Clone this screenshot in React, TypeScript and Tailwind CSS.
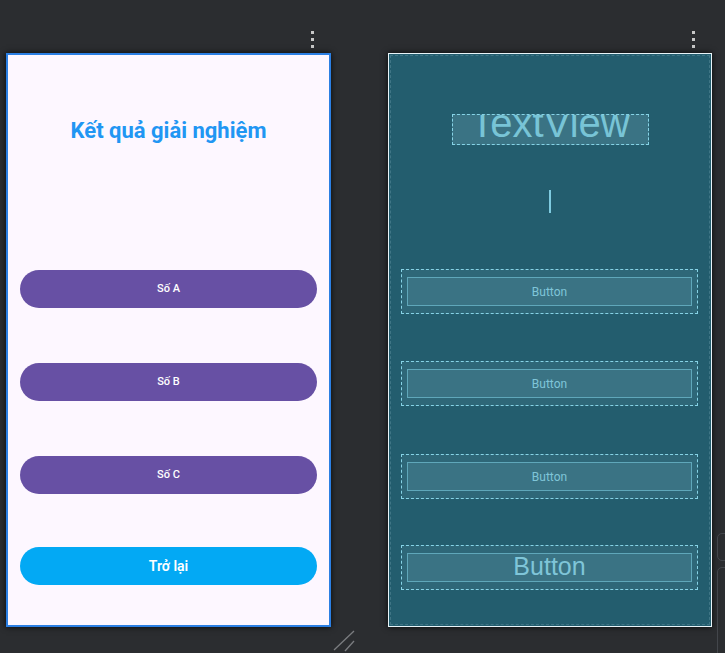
const Dots = () => (
    <div className="flex flex-col gap-[4px] pt-[31px]">
        <span className="w-[3px] h-[3px] bg-[#c8c8c8]" />
        <span className="w-[3px] h-[3px] bg-[#c8c8c8]" />
        <span className="w-[3px] h-[3px] bg-[#c8c8c8]" />
    </div>
);

const DesignButton = ({ label, className }: { label: string; className: string }) => (
    <div
        className={`mx-[12px] h-[38px] rounded-full flex items-center justify-center text-white ${className}`}
    >
        {label}
    </div>
);

const BlueprintButton = ({ big, className }: { big?: boolean; className: string }) => (
    <div
        className={`ml-[10px] mr-[11px] h-[45px] border border-dashed border-[#86d3e6] bg-[#2e6778] px-[5px] py-[7px] ${className}`}
    >
        <div className="h-full border border-[#5fa7ba] bg-[#3a7384] flex items-center justify-center text-[#7fc5d8]">
            {big ? (
                <span className="text-[25px] leading-none font-['Liberation_Sans',sans-serif] -mt-[3px]">Button</span>
            ) : (
                <span className="text-[12px] leading-none font-['Roboto',sans-serif]">Button</span>
            )}
        </div>
    </div>
);

export default function App() {
    return (
        <div className="relative w-[725px] h-[653px] overflow-hidden bg-[#2b2d30] flex pl-[6px]">
            {/* Design view */}
            <div className="w-[325px] flex flex-col">
                <div className="h-[53px] flex justify-end pr-[17px]">
                    <Dots />
                </div>
                <div className="h-[574px] border-2 border-[#2b7fe3] bg-[#fdf7ff] flex flex-col shadow-[0_0_6px_rgba(0,0,0,0.8)] font-['Roboto',sans-serif]">
                    <h1 className="mt-[61px] h-[30px] text-center text-[22px] leading-[30px] font-bold text-[#2196f3]">
                        Kết quả giải nghiệm
                    </h1>
                    <DesignButton label="Số A" className="mt-[124px] bg-[#6750a4] text-[11px] font-medium" />
                    <DesignButton label="Số B" className="mt-[55px] bg-[#6750a4] text-[11px] font-medium" />
                    <DesignButton label="Số C" className="mt-[55px] bg-[#6750a4] text-[11px] font-medium" />
                    <DesignButton label="Trở lại" className="mt-[53px] bg-[#03a9f4] text-[14px] font-semibold" />
                </div>
            </div>

            {/* Blueprint view */}
            <div className="ml-[57px] w-[324px] flex flex-col">
                <div className="h-[53px] flex justify-end pr-[17px]">
                    <Dots />
                </div>
                <div className="h-[574px] border border-[#e8f4f8] bg-[#235d6e] p-[1px] shadow-[0_0_6px_rgba(0,0,0,0.8)]">
                    <div className="h-full border border-dashed border-[#3f7585] flex flex-col">
                        <div className="mt-[58px] mx-auto w-[197px] h-[31px] border border-dashed border-[#86d3e6] bg-[#3a7384] overflow-hidden flex items-end justify-center pb-[1px]">
                            <span className="text-[40px] leading-[40px] text-[#78c4d6] font-['Liberation_Sans',sans-serif]">
                                TextView
                            </span>
                        </div>
                        <div className="mt-[45px] mx-auto w-[2px] h-[23px] bg-[#7fcbe0]" />
                        <BlueprintButton className="mt-[56px]" />
                        <BlueprintButton className="mt-[47px]" />
                        <BlueprintButton className="mt-[48px]" />
                        <BlueprintButton big className="mt-[46px]" />
                    </div>
                </div>
            </div>

            {/* floating side panels at the right edge */}
            <div className="absolute left-[717px] top-[533px] w-[20px] h-[28px] rounded-[5px] border border-[#43464b]" />
            <div className="absolute left-[717px] top-[567px] w-[20px] h-[100px] rounded-[5px] border border-[#43464b]" />

            {/* resize handle */}
            <svg className="absolute left-[330px] top-[627px]" width="30" height="26" viewBox="0 0 30 26">
                <line x1="4" y1="23" x2="24" y2="4" stroke="#7b7d80" strokeWidth="1.3" />
                <line x1="15" y1="24" x2="24" y2="14" stroke="#7b7d80" strokeWidth="1.3" />
            </svg>
        </div>
    );
}
